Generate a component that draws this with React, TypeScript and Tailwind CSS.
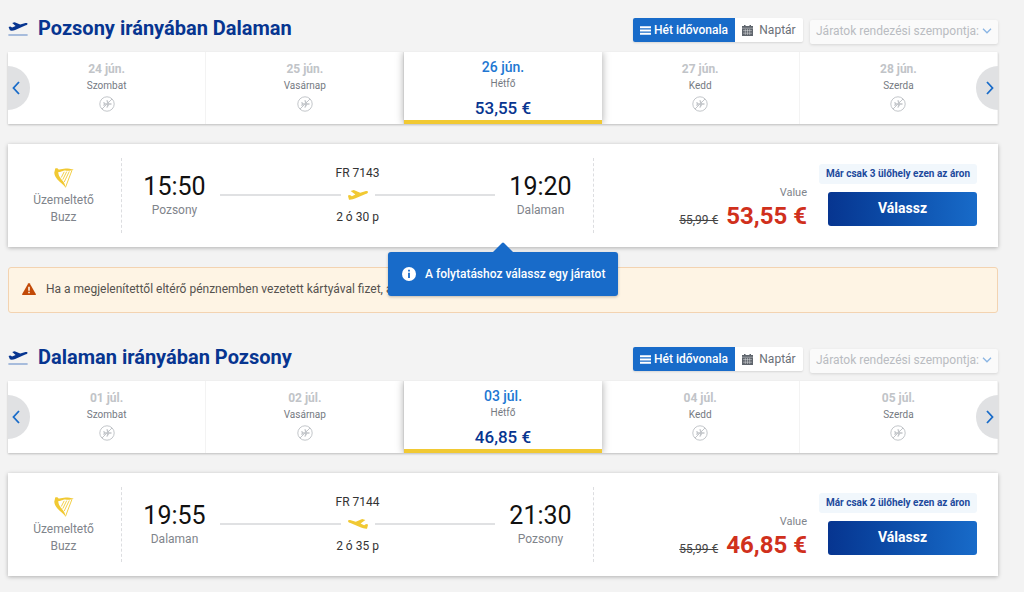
import { useState } from "react";

type Day = { date: string; name: string; price?: string };

type Flight = {
  id: string;
  title: string;
  days: Day[];
  number: string;
  duration: string;
  depart: string;
  from: string;
  arrive: string;
  to: string;
  inbound?: boolean;
  seats: string;
  oldPrice: string;
  price: string;
};

const flights: Flight[] = [
  {
    id: "outbound",
    title: "Pozsony irányában Dalaman",
    days: [
      { date: "24 jún.", name: "Szombat" },
      { date: "25 jún.", name: "Vasárnap" },
      { date: "26 jún.", name: "Hétfő", price: "53,55 €" },
      { date: "27 jún.", name: "Kedd" },
      { date: "28 jún.", name: "Szerda" },
    ],
    number: "FR 7143",
    duration: "2 ó 30 p",
    depart: "15:50",
    from: "Pozsony",
    arrive: "19:20",
    to: "Dalaman",
    seats: "Már csak 3 ülőhely ezen az áron",
    oldPrice: "55,99 €",
    price: "53,55 €",
  },
  {
    id: "inbound",
    title: "Dalaman irányában Pozsony",
    days: [
      { date: "01 júl.", name: "Szombat" },
      { date: "02 júl.", name: "Vasárnap" },
      { date: "03 júl.", name: "Hétfő", price: "46,85 €" },
      { date: "04 júl.", name: "Kedd" },
      { date: "05 júl.", name: "Szerda" },
    ],
    number: "FR 7144",
    duration: "2 ó 35 p",
    depart: "19:55",
    from: "Dalaman",
    arrive: "21:30",
    to: "Pozsony",
    inbound: true,
    seats: "Már csak 2 ülőhely ezen az áron",
    oldPrice: "55,99 €",
    price: "46,85 €",
  },
];

function Plane({ className }: { className: string }) {
  return (
    <svg viewBox="0 0 20 10" className={className} fill="currentColor" aria-hidden="true">
      <path d="M2.600 1 5.800.1 12.200 2.700 17.200 1.200C18.900.7 20.300 1.100 20 2.200c-.2.900-1.300 1.500-2.400 1.900L7.600 8.300C5.500 9.300 3 9.900 1 9.700L-.1 5.600l2-.5 2 1.200 3.500-1.800z" />
    </svg>
  );
}

function TitlePlane() {
  return (
    <svg viewBox="0 0 20 14" className="mb-[6px] h-[14px] w-5 shrink-0" aria-hidden="true">
      <path
        fill="#073590"
        d="M4.200.9 6.600.2 12.200 2.400 16.600 1.200c1.700-.4 3.100-.2 2.900.8-.1.700-1.200 1.200-2.300 1.600L7.200 7.900C5.200 8.700 3.100 9 1.900 8.300L.6 4.900l1.700-.4L4.100 5.500l3.500-1.400z"
      />
      <path fill="#5b84c4" d="M.4 12.500h19.200v1H.4z" />
    </svg>
  );
}

function NoFlight() {
  return (
    <svg viewBox="0 0 16 16" className="size-4" fill="none" stroke="#c3c6ca" aria-hidden="true">
      <circle cx="8" cy="8" r="7.200" />
      <path d="M3 13 13 3" />
      <path
        fill="#c3c6ca"
        stroke="none"
        d="m4.300 6 .9-.1.9 1.400h2L7.400 4.200l1-.1 1.800 3.200h1.600c.6 0 1 .3 1 .7s-.4.700-1 .7h-1.600l-1.800 3.100-1-.1.700-3h-2l-.9 1.400-.9-.1.400-2z"
      />
    </svg>
  );
}

function Harp() {
  return (
    <svg viewBox="0 0 20 20" className="h-5 w-5" fill="none" stroke="#f1c933" aria-hidden="true">
      <path
        fill="#f1c933"
        stroke="none"
        d="M1.200.6C2.400-.2 4 .2 4.500 1.400c2 .5 4.400-.9 7.200-.9 2.600 0 5.300.7 8.100.8-1.200.9-2.600 1.400-4.300 1.400-2.500.1-4.100-.6-6.100 0-1.700.5-3.300 1.500-5 1.300-.3 2 .6 4.100 2.200 6.300 1.400 1.900 3.600 4 4.200 6.200l.9 3.300C9.600 16.800 6 14.500 3.200 11.300.8 8.500-.4 5.200.7 2.900z"
      />
      <path
        strokeWidth=".9"
        d="M18 2.200 11.500 19.300M15.300 3.400 10.200 14M12.700 3.600 8.800 11.600M10.200 3.800 7.300 9.500"
      />
    </svg>
  );
}

function Chevron({ d }: { d: string }) {
  return (
    <svg viewBox="0 0 8 14" className="h-[14px] w-2" fill="none" stroke="currentColor" strokeWidth="1.800" aria-hidden="true">
      <path d={d} />
    </svg>
  );
}

function Header({ flight }: { flight: Flight }) {
  return (
    <header className="flex h-7 items-end">
      <TitlePlane />
      <h2 className="ml-[10px] grow text-[20px] leading-7 font-bold text-[#073590]">{flight.title}</h2>
      <div className="flex h-6 rounded-[2px] text-[12px] shadow-[0_1px_2px_rgba(0,0,0,0.12)]">
        <button type="button" className="flex w-[102px] items-center justify-center gap-[3px] rounded-l-[2px] bg-[#186bc9] font-medium text-white">
          <svg viewBox="0 0 11 9" className="h-[9px] w-[11px]" fill="currentColor" aria-hidden="true">
            <path d="M0 .3h11v2H0zM0 3.500h11v2H0zM0 6.700h11v2H0z" />
          </svg>
          Hét idővonala
        </button>
        <button type="button" className="flex w-[68px] items-center justify-center gap-[6px] rounded-r-[2px] bg-white text-[#6b7078]">
          <svg viewBox="0 0 11 11" className="size-[11px]" aria-hidden="true">
            <path fill="#5f656d" d="M2 0h1.500v1H7.500V0H9v1h2v10H0V1h2z" />
            <path stroke="#fff" strokeWidth=".4" d="M0 3.200h11M1 5.600h9M1 8.200h9M3.300 4v6M5.500 4v6M7.700 4v6" />
          </svg>
          Naptár
        </button>
      </div>
      <div className="relative ml-[7px] h-6 w-[188px]">
        <select
          disabled
          aria-label="Járatok rendezési szempontja"
          className="h-6 w-full appearance-none rounded-[2px] bg-[#fafafa] pr-4 pb-[2px] pl-[6px] text-[12px] text-[#b9bcc1] opacity-100 shadow-[0_1px_3px_rgba(0,0,0,0.12)]"
        >
          <option>Járatok rendezési szempontja:</option>
        </select>
        <svg viewBox="0 0 10 6" className="pointer-events-none absolute top-[10px] right-[6px] h-[6px] w-[10px]" fill="none" stroke="#8ab5e4" strokeWidth="1.300" aria-hidden="true">
          <path d="m1 .8 4 4 4-4" />
        </svg>
      </div>
    </header>
  );
}

function DayStrip({ days }: { days: Day[] }) {
  const [selected, setSelected] = useState(2);
  return (
    <div className="relative mt-[10px] flex h-[72px] overflow-hidden bg-white shadow-[0_1px_2px_rgba(0,0,0,0.22)]">
      {days.map((day, i) => (
        <button
          key={day.date}
          type="button"
          onClick={() => setSelected(i)}
          className={
            i === selected
              ? "relative flex flex-1 flex-col items-center border-b-4 border-[#f1c933] bg-white pt-[6px] shadow-[0_0_8px_rgba(0,0,0,0.35)]"
              : "flex flex-1 flex-col items-center border-r border-[#f3f3f3] pt-2"
          }
        >
          <span className={i === selected ? "text-[14px] leading-[18px] font-medium text-[#2177d2]" : "text-[12px] leading-[18px] font-bold text-[#c1c4c8]"}>
            {day.date}
          </span>
          <span className="text-[10px] leading-4 text-[#757a82]">{day.name}</span>
          {day.price ? (
            <span className="mt-[6px] text-[17px] leading-5 font-medium text-[#073590]">{day.price}</span>
          ) : (
            <span className="mt-[2px]">
              <NoFlight />
            </span>
          )}
        </button>
      ))}
      <button type="button" aria-label="Előző napok" className="absolute top-[14px] left-0 flex h-11 w-[22px] items-center rounded-r-full bg-[#e0e1e3] pl-1 text-[#186bc9]">
        <Chevron d="M7 1 1.500 7 7 13" />
      </button>
      <button type="button" aria-label="Következő napok" className="absolute top-[14px] right-0 flex h-11 w-[22px] items-center justify-end rounded-l-full bg-[#e0e1e3] pr-1 text-[#186bc9]">
        <Chevron d="m1 1 5.500 6L1 13" />
      </button>
    </div>
  );
}

function Stop({ time, city }: { time: string; city: string }) {
  return (
    <div className="flex w-[63px] flex-col items-center pb-[2px]">
      <span className="text-[25px] leading-8 text-[#111]">{time}</span>
      <span className="text-[12px] leading-[14px] text-[#7f848b]">{city}</span>
    </div>
  );
}

function FlightCard({ flight }: { flight: Flight }) {
  return (
    <article className="mt-5 flex h-[103px] items-center bg-white shadow-[0_1px_4px_rgba(0,0,0,0.28)]">
      <div className="flex h-[75px] w-[114px] shrink-0 flex-col items-center justify-center border-r border-dashed border-[#dcdde0] pt-[2px] pr-[2px] text-center text-[12px] leading-[17px] text-[#7f848b]">
        <Harp />
        <span className="mt-1">
          Üzemeltető
          <br />
          Buzz
        </span>
      </div>
      <div className="flex h-[75px] grow items-center border-r border-dashed border-[#dcdde0] px-[21px] pb-[2px]">
        <Stop time={flight.depart} city={flight.from} />
        <div className="flex grow flex-col items-center gap-[10px] px-[14px] text-[12px] leading-[14px] text-[#333]">
          <span>{flight.number}</span>
          <div className="flex w-full items-center gap-[7px] text-[#f1c933]">
            <span className="h-[2px] grow bg-[#e0e1e3]" />
            <Plane className={flight.inbound ? "h-[10px] w-5 -scale-x-100" : "h-[10px] w-5"} />
            <span className="h-[2px] grow bg-[#e0e1e3]" />
          </div>
          <span>{flight.duration}</span>
        </div>
        <Stop time={flight.arrive} city={flight.to} />
      </div>
      <div className="flex w-[404px] shrink-0 items-end justify-end gap-[21px] pr-[21px] pb-[2px]">
        <div className="flex flex-col items-end gap-[6px]">
          <span className="text-[11px] leading-[14px] text-[#7f848b]">Value</span>
          <div className="flex items-baseline gap-2">
            <del className="text-[12px] leading-3 text-[#444]">{flight.oldPrice}</del>
            <strong className="text-[24px] leading-5 font-bold text-[#d0301c]">{flight.price}</strong>
          </div>
        </div>
        <div className="flex w-[149px] flex-col items-end gap-2">
          <span className="rounded-[3px] bg-[#f1f7fc] px-[7px] text-[10px] leading-5 font-bold whitespace-nowrap text-[#1d4a9c]">{flight.seats}</span>
          <button type="button" className="h-[34px] w-full rounded-[3px] bg-linear-to-r from-[#073590] to-[#186bc9] text-[14px] font-bold text-white">
            Válassz
          </button>
        </div>
      </div>
    </article>
  );
}

function Tooltip() {
  return (
    <div role="tooltip" className="absolute top-full left-1/2 z-10 mt-[5px] flex h-11 w-[230px] -translate-x-1/2 items-center gap-[9px] rounded-[3px] bg-[#186bc9] pl-[14px] text-[12px] font-medium whitespace-nowrap text-white shadow-[0_1px_3px_rgba(0,0,0,0.25)]">
      <svg viewBox="0 0 20 10" className="absolute bottom-full left-1/2 h-[10px] w-5 -translate-x-1/2" fill="#186bc9" aria-hidden="true">
        <path d="M0 10 9 1q1-1 2 0l9 9z" />
      </svg>
      <svg viewBox="0 0 14 14" className="size-[14px] shrink-0" aria-hidden="true">
        <circle cx="7" cy="7" r="7" fill="#fff" />
        <path fill="#186bc9" d="M6.100 2.800h1.800v1.800H6.100zM6.100 5.700h1.800v5.300H6.100z" />
      </svg>
      A folytatáshoz válassz egy járatot
    </div>
  );
}

export default function App() {
  return (
    <main className="min-h-screen bg-[#f3f3f3] pt-[14px] pr-[26px] pb-4 pl-2 font-['Roboto',sans-serif]">
      <section>
        <Header flight={flights[0]} />
        <DayStrip days={flights[0].days} />
        <div className="relative">
          <FlightCard flight={flights[0]} />
          <Tooltip />
        </div>
      </section>
      <div role="alert" className="mt-5 flex h-[46px] items-center gap-[10px] rounded-[3px] border border-[#f3d3b1] bg-[#fef4e4] px-[13px] pb-[2px] text-[12px] text-[#55524e]">
        <svg viewBox="0 0 14 12" className="h-3 w-[14px] shrink-0" aria-hidden="true">
          <path fill="#c24a08" d="M7 0q.5 0 .8.500l6 10.500q.3 1-.7 1H.9q-1 0-.7-1l6-10.500Q6.500 0 7 0z" />
          <path fill="#fef4e4" d="M6.200 3.800h1.600v4H6.200zM6.200 8.800h1.600v1.500H6.200z" />
        </svg>
        Ha a megjelenítettől eltérő pénznemben vezetett kártyával fizet, a
      </div>
      <section className="mt-[30px]">
        <Header flight={flights[1]} />
        <DayStrip days={flights[1].days} />
        <FlightCard flight={flights[1]} />
      </section>
    </main>
  );
}
